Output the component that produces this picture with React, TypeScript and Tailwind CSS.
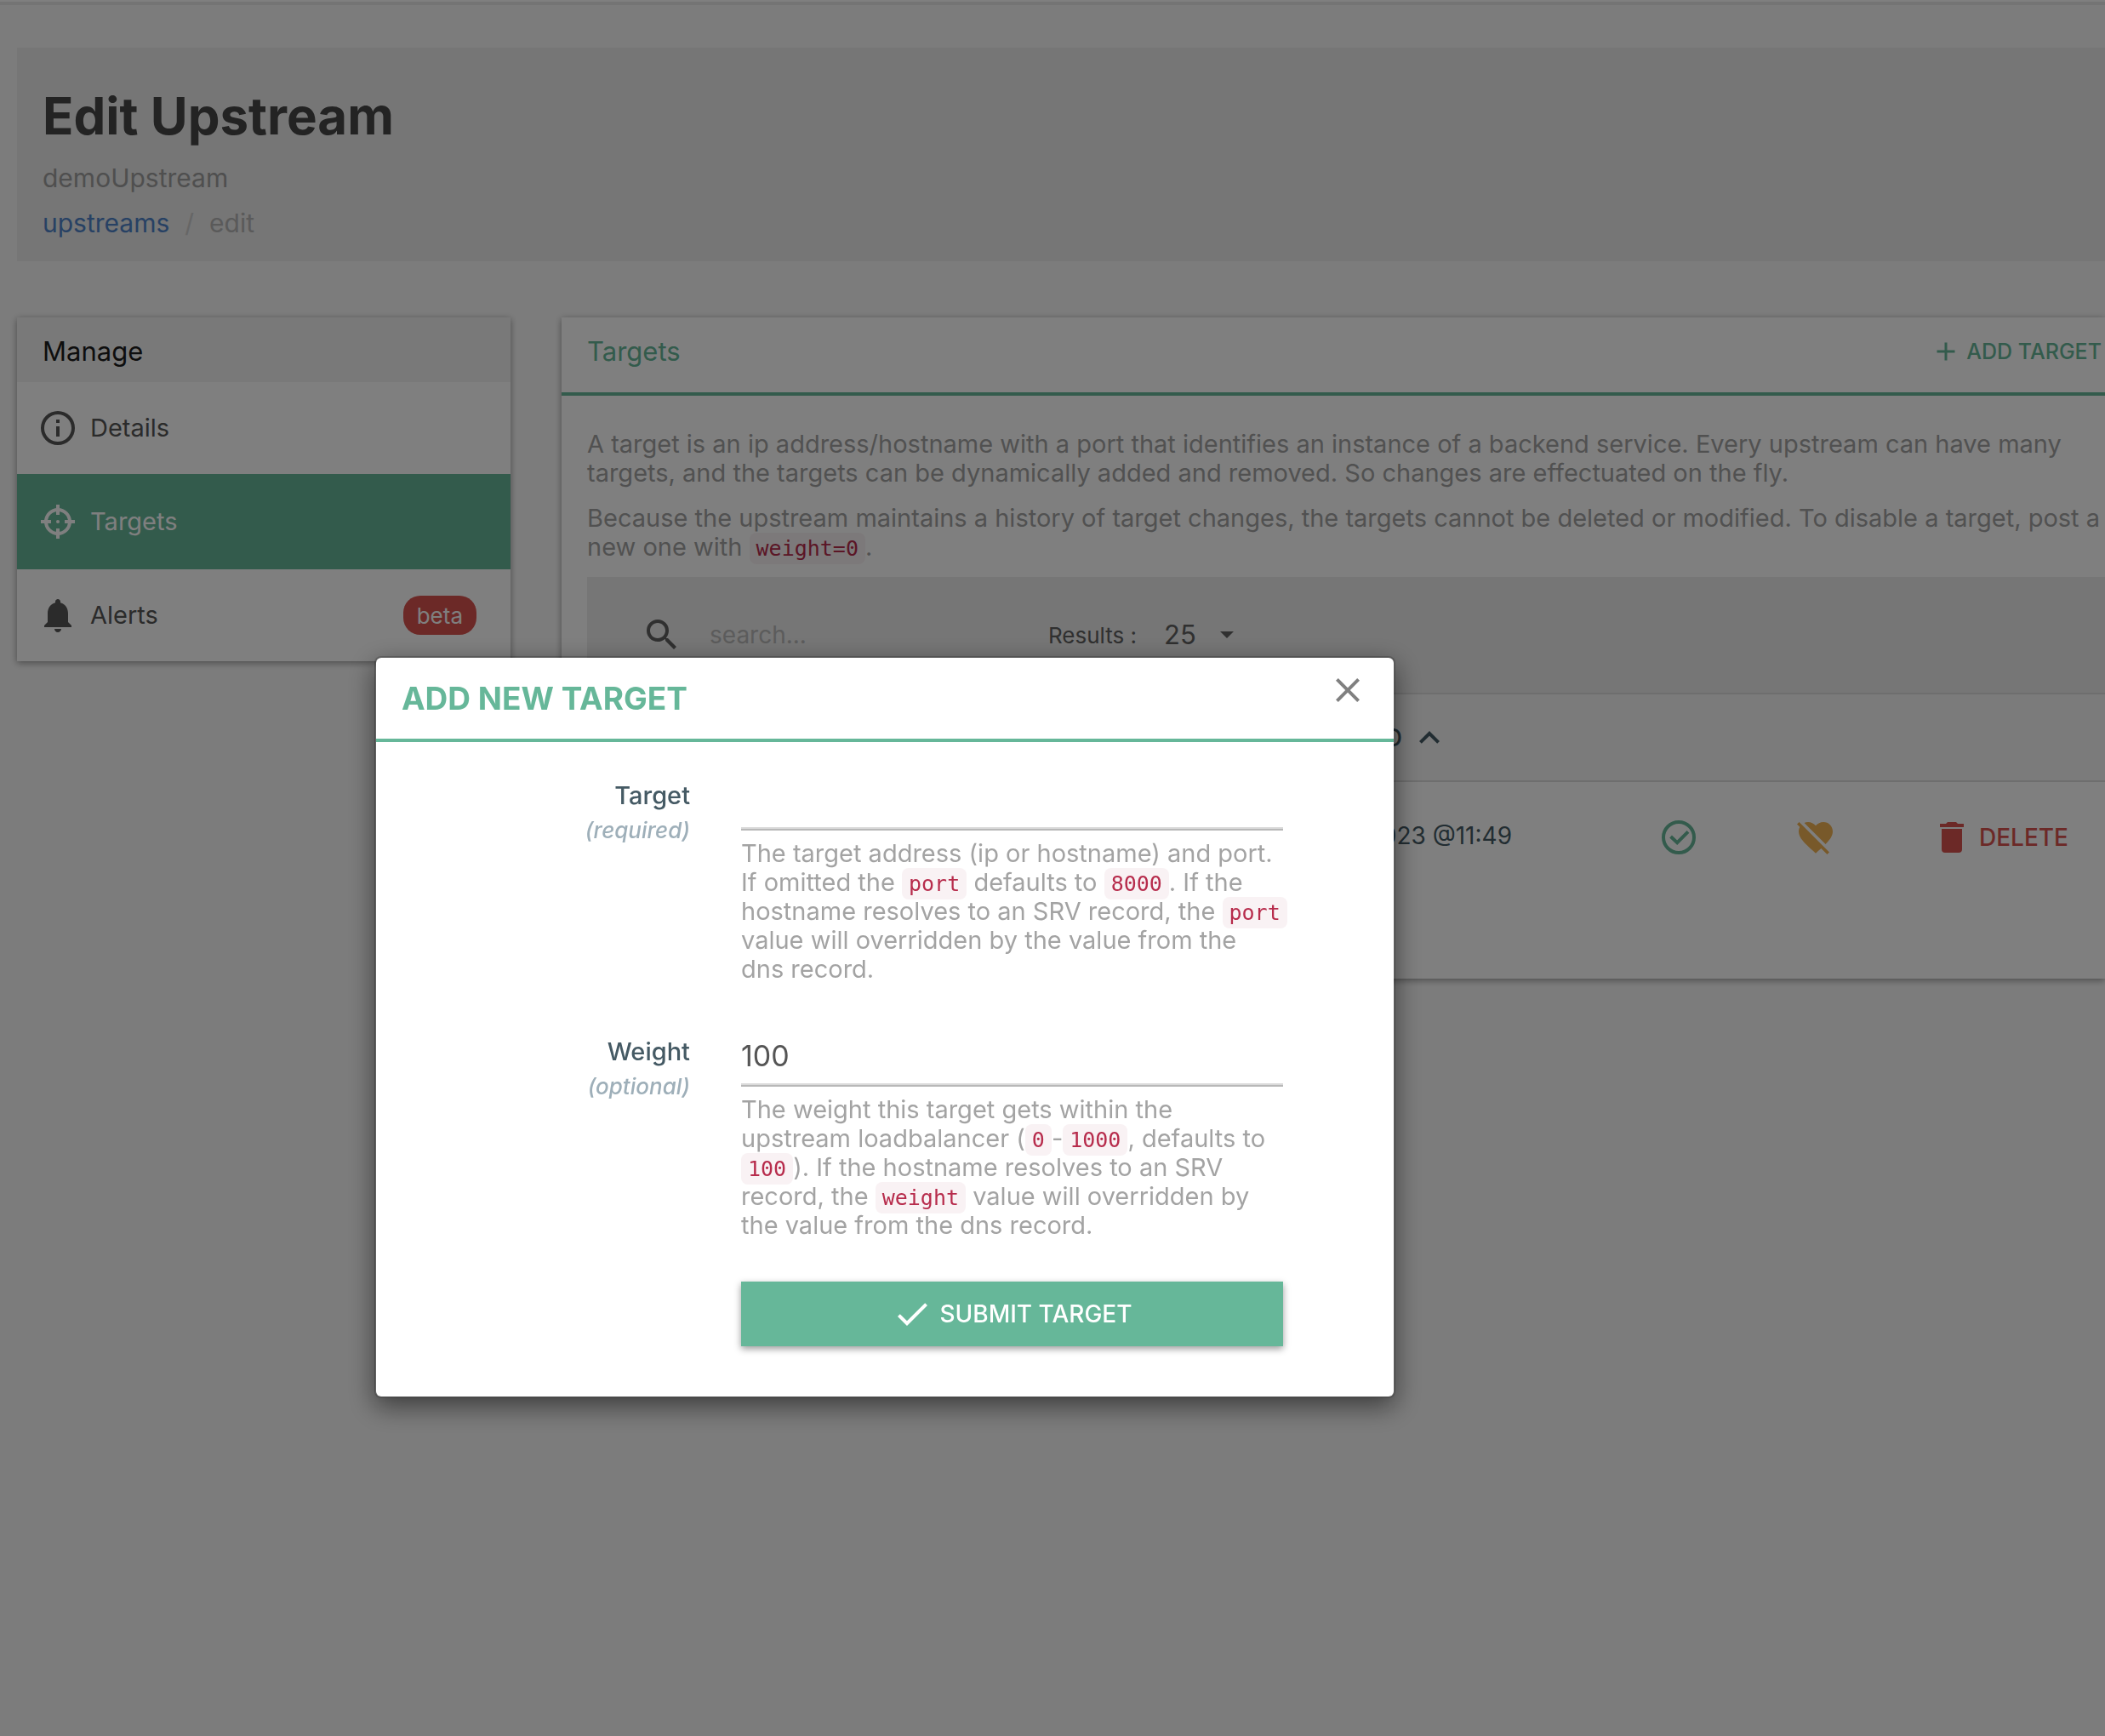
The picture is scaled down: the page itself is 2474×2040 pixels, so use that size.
import type { ReactNode } from 'react';

const ICONS = {
  info: 'M11,9H13V7H11M12,20C7.59,20 4,16.41 4,12C4,7.59 7.59,4 12,4C16.41,4 20,7.59 20,12C20,16.41 16.41,20 12,20M12,2A10,10 0 0,0 2,12A10,10 0 0,0 12,22A10,10 0 0,0 22,12A10,10 0 0,0 12,2M11,17H13V11H11V17Z',
  bell: 'M12 22c1.1 0 2-.9 2-2h-4c0 1.1.89 2 2 2zm6-6v-5c0-3.07-1.64-5.64-4.5-6.32V4c0-.83-.67-1.5-1.5-1.5s-1.5.67-1.5 1.5v.68C7.63 5.36 6 7.92 6 11v5l-2 2v1h16v-1l-2-2z',
  plus: 'M19,13H13V19H11V13H5V11H11V5H13V11H19V13Z',
  search:
    'M9.5,3A6.5,6.5 0 0,1 16,9.5C16,11.11 15.41,12.59 14.44,13.73L14.71,14H15.5L20.5,19L19,20.5L14,15.5V14.71L13.73,14.44C12.59,15.41 11.11,16 9.5,16A6.5,6.5 0 0,1 3,9.5A6.5,6.5 0 0,1 9.5,3M9.5,5C7,5 5,7 5,9.5C5,12 7,14 9.5,14C12,14 14,12 14,9.5C14,7 12,5 9.5,5Z',
  chevronUp: 'M7.41,15.41L12,10.83L16.59,15.41L18,14L12,8L6,14L7.41,15.41Z',
  heartOff:
    'M1,4.27L2.28,3L20,20.72L18.73,22L15.18,18.44L13.45,20.03L12,21.35L10.55,20.03C5.4,15.36 2,12.27 2,8.5C2,7.55 2.23,6.67 2.63,5.9L1,4.27M7.5,3C9.24,3 10.91,3.81 12,5.08C13.09,3.81 14.76,3 16.5,3C19.58,3 22,5.41 22,8.5C22,11.07 20.42,13.32 17.79,15.97L5.27,3.45C5.95,3.16 6.7,3 7.5,3Z',
  trash: 'M19,4H15.5L14.5,3H9.5L8.5,4H5V6H19M6,19A2,2 0 0,0 8,21H16A2,2 0 0,0 18,19V7H6V19Z',
  close:
    'M19,6.41L17.59,5L12,10.59L6.41,5L5,6.41L10.59,12L5,17.59L6.41,19L12,13.41L17.59,19L19,17.59L13.41,12L19,6.41Z',
  check: 'M21,7L9,19L3.5,13.5L4.91,12.09L9,16.17L19.59,5.59L21,7Z',
};

interface IconProps {
  name: keyof typeof ICONS;
  className?: string;
}

function Icon({ name, className = 'size-12' }: IconProps) {
  return (
    <svg viewBox="0 0 24 24" fill="currentColor" aria-hidden="true" className={`shrink-0 ${className}`}>
      <path d={ICONS[name]} />
    </svg>
  );
}

function CrosshairIcon() {
  return (
    <svg viewBox="0 0 24 24" fill="none" stroke="currentColor" strokeWidth="2" aria-hidden="true" className="size-12 shrink-0">
      <circle cx="12" cy="12" r="7" />
      <path d="M12 2v6M12 16v6M2 12h6M16 12h6" />
      <circle cx="12" cy="12" r="1" fill="currentColor" stroke="none" />
    </svg>
  );
}

function CheckCircleIcon() {
  return (
    <svg viewBox="0 0 24 24" fill="none" stroke="currentColor" strokeWidth="2" aria-hidden="true" className="size-12 shrink-0">
      <circle cx="12" cy="12" r="9" />
      <path d="M7.3 11.5l3.8 3.6 6.4-6.4" />
    </svg>
  );
}

function Code({ children }: { children: ReactNode }) {
  return (
    <code className='rounded-lg bg-[#f9f2f4] px-2 py-1 font-["DejaVu_Sans_Mono",monospace] text-[25px] leading-none font-normal text-[#b72c4c]'>
      {children}
    </code>
  );
}

function PageHeader() {
  return (
    <header className="bg-[#ececec] px-[30px] pt-[50px] pb-[25px]">
      <h1 className="text-[60px] leading-[60px] font-bold text-[#464646]">Edit Upstream</h1>
      <p className="mt-[23px] text-[30px] leading-10 text-[#9f9f9f]">demoUpstream</p>
      <nav className="mt-[13px] flex gap-[18px] text-[30px] leading-10">
        <a href="#upstreams" className="text-[#4f83c8]">
          upstreams
        </a>
        <span className="text-[#cccccc]">/</span>
        <span className="text-[#b5b5b5]">edit</span>
      </nav>
    </header>
  );
}

function Sidebar() {
  return (
    <aside className="w-[580px] shrink-0 bg-white text-[#565656] shadow-[0_2px_8px_rgba(0,0,0,0.4)]">
      <h2 className="bg-[#f2f2f2] px-[30px] pt-5 pb-4 text-[31px] leading-10 text-[#1c1c1c]">Manage</h2>
      <nav className="text-[29px]">
        <a href="#details" className="flex h-[108px] items-center gap-[14px] px-6">
          <Icon name="info" />
          Details
        </a>
        <a href="#targets" className="flex h-[112px] items-center gap-[14px] bg-[#66b799] px-6 text-white">
          <CrosshairIcon />
          Targets
        </a>
        <a href="#alerts" className="flex h-[108px] items-center gap-[14px] pr-10 pl-6">
          <Icon name="bell" />
          Alerts
          <span className="ml-auto flex h-[46px] items-center rounded-[20px] bg-[#d9534f] px-4 text-[26px] text-white">
            beta
          </span>
        </a>
      </nav>
    </aside>
  );
}

function TargetsTable() {
  return (
    <table className="w-full table-fixed">
      <colgroup>
        <col className="w-[1087px]" />
        <col className="w-[220px]" />
        <col className="w-[161px]" />
        <col />
      </colgroup>
      <thead>
        <tr className="h-[103px] border-y-2 border-[#dcdcdc] bg-[#f7f7f7] text-[28px] text-[#455a64]">
          <th className="pr-[73px] font-medium">
            <div className="flex items-center justify-end gap-2">
              CREATED
              <Icon name="chevronUp" />
            </div>
          </th>
          <th />
          <th />
          <th />
        </tr>
      </thead>
      <tbody>
        <tr className="h-[130px] text-[28px] text-[#455a64]">
          <td className="pb-1 text-right">2023 @11:49</td>
          <td>
            <div className="flex justify-end text-[#66b799]">
              <CheckCircleIcon />
            </div>
          </td>
          <td>
            <div className="flex justify-end text-[#f0b354]">
              <Icon name="heartOff" />
            </div>
          </td>
          <td className="pl-[112px]">
            <button type="button" className="flex items-center gap-2 font-medium text-[#d9534f]">
              <Icon name="trash" />
              DELETE
            </button>
          </td>
        </tr>
      </tbody>
    </table>
  );
}

function TargetsPanel() {
  return (
    <section className="min-w-0 flex-1 bg-white pb-[102px] shadow-[0_2px_8px_rgba(0,0,0,0.4)]">
      <div className="flex justify-between border-b-4 border-[#66b799] pt-5 pr-1 pb-7 pl-[30px] text-[#66b799]">
        <h2 className="text-[31px] leading-10">Targets</h2>
        <button type="button" className="flex items-center gap-[6px] text-[25px] leading-10 font-medium">
          <Icon name="plus" className="size-9" />
          ADD TARGET
        </button>
      </div>
      <div className="pt-10 pl-[30px]">
        <div className="space-y-[19px] text-[29px] leading-[34px] text-[#a3a3a3]">
          <p>
            A target is an ip address/hostname with a port that identifies an instance of a backend service. Every
            upstream can have many targets, and the targets can be dynamically added and removed. So changes are
            effectuated on the fly.
          </p>
          <p>
            Because the upstream maintains a history of target changes, the targets cannot be deleted or modified. To
            disable a target, post a new one with <Code>weight=0</Code>.
          </p>
        </div>
        <div className="mt-[18px] flex h-[136px] items-center bg-[#ececec] pl-16 text-[#606060]">
          <label htmlFor="search">
            <Icon name="search" />
          </label>
          <input
            id="search"
            type="text"
            placeholder="search..."
            className="ml-8 w-[398px] text-[28px] placeholder:text-[#b8b8b8]"
          />
          <label htmlFor="results" className="text-[26px]">
            Results :
          </label>
          <select id="results" defaultValue="25" className="ml-8 w-[66px] appearance-none text-[31px]">
            <option>25</option>
            <option>50</option>
            <option>100</option>
          </select>
          <svg viewBox="0 0 16 8" fill="currentColor" aria-hidden="true" className="h-2 w-4">
            <path d="M0 0h16L8 8z" />
          </svg>
        </div>
        <TargetsTable />
      </div>
    </section>
  );
}

interface FieldProps {
  id: string;
  label: string;
  hint: string;
  defaultValue?: string;
  children: ReactNode;
}

function Field({ id, label, hint, defaultValue, children }: FieldProps) {
  return (
    <div className="flex gap-[60px]">
      <label htmlFor={id} className="w-[369px] shrink-0 pt-[10px] text-right text-[29px] leading-[41px] font-medium text-[#455a64]">
        {label}
        <em className="block text-[26px] text-[#9eafb9]">({hint})</em>
      </label>
      <div className="min-w-0 flex-1">
        <input
          id={id}
          type="text"
          defaultValue={defaultValue}
          className="block h-[72px] w-full border-b-2 border-[#b8b8b8] text-[34px] text-[#555555] shadow-[inset_0_-2px_0_#dadada]"
        />
        <p className="mt-[10px] -mr-3 text-[29px] leading-[34px] text-[#a3a3a3]">{children}</p>
      </div>
    </div>
  );
}

function AddTargetModal() {
  return (
    <div className="fixed inset-0 overflow-auto bg-black/50 pt-[771px] pl-[440px]">
      <div
        role="dialog"
        aria-labelledby="modal-title"
        className="w-full max-w-[1200px] rounded-lg border-2 border-black/20 bg-white bg-clip-padding shadow-[0_10px_30px_rgba(0,0,0,0.5)]"
      >
        <div className="flex justify-between border-b-4 border-[#66b799] pt-[14px] pr-[30px] pb-[21px] pl-[30px]">
          <h3 id="modal-title" className="pt-2 text-[37px] leading-[52px] font-bold text-[#66b799]">
            ADD NEW TARGET
          </h3>
          <button type="button" aria-label="Close" className="h-12 text-[#808080]">
            <Icon name="close" />
          </button>
        </div>
        <form className="space-y-[49px] pt-8 pr-[130px] pb-[59px]">
          <Field id="target" label="Target" hint="required">
            The target address (ip or hostname) and port.
            <br />
            If omitted the <Code>port</Code> defaults to <Code>8000</Code>. If the
            <br />
            hostname resolves to an SRV record, the <Code>port</Code>
            <br />
            value will overridden by the value from the
            <br />
            dns record.
          </Field>
          <Field id="weight" label="Weight" hint="optional" defaultValue="100">
            The weight this target gets within the
            <br />
            upstream loadbalancer (<Code>0</Code>-<Code>1000</Code>, defaults to
            <br />
            <Code>100</Code>). If the hostname resolves to an SRV
            <br />
            record, the <Code>weight</Code> value will overridden by
            <br />
            the value from the dns record.
          </Field>
          <div className="pl-[429px]">
            <button
              type="button"
              className="flex h-[76px] w-full items-center justify-center gap-2 bg-[#66b799] text-[28px] font-medium text-white shadow-[0_3px_8px_rgba(0,0,0,0.4)]"
            >
              <Icon name="check" />
              SUBMIT TARGET
            </button>
          </div>
        </form>
      </div>
    </div>
  );
}

export default function App() {
  return (
    <div className='min-h-screen overflow-hidden bg-[#f9f9f9] font-["Inter",sans-serif]'>
      <div className="h-[6px] border-t-2 border-b-4 border-t-white border-b-[#e8e8e8]" />
      <main className="pt-[50px] pl-5">
        <PageHeader />
        <div className="mt-[66px] flex items-start gap-[60px]">
          <Sidebar />
          <TargetsPanel />
        </div>
      </main>
      <AddTargetModal />
    </div>
  );
}
